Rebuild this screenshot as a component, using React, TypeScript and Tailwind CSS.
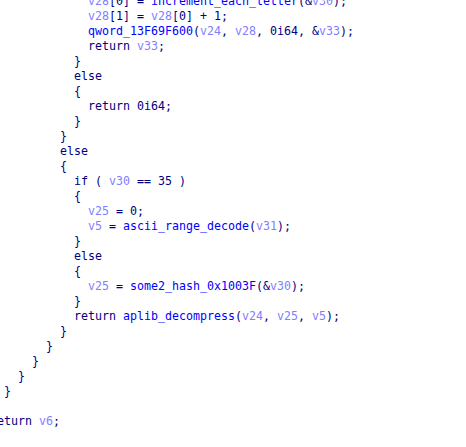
const lines: [number, string][] = [
    [14, "v28[0] = increment_each_letter(&v30);"],
    [14, "v28[1] = v28[0] + 1;"],
    [14, "qword_13F69F600(v24, v28, 0i64, &v33);"],
    [14, "return v33;"],
    [12, "}"],
    [12, "else"],
    [12, "{"],
    [14, "return 0i64;"],
    [12, "}"],
    [10, "}"],
    [10, "else"],
    [10, "{"],
    [12, "if ( v30 == 35 )"],
    [12, "{"],
    [14, "v25 = 0;"],
    [14, "v5 = ascii_range_decode(v31);"],
    [12, "}"],
    [12, "else"],
    [12, "{"],
    [14, "v25 = some2_hash_0x1003F(&v30);"],
    [12, "}"],
    [12, "return aplib_decompress(v24, v25, v5);"],
    [10, "}"],
    [8, "}"],
    [6, "}"],
    [4, "}"],
    [2, "}"],
    [0, ""],
    [0, "return v6;"],
]

// split a line into colored pieces, roughly like the IDA pseudocode view
function tokens(text: string) {
    const parts = text.match(/[A-Za-z_][A-Za-z0-9_]*|\d[A-Za-z0-9]*|\s+|./g) ?? []
    return parts.map((p, i) => {
        let cls = "text-[#000080]"
        if (/^v\d+$/.test(p)) cls = "text-[#8080ff]"
        else if (/^[A-Za-z_]/.test(p) && parts[i + 1] === "(") cls = "text-[#0000ff]"
        return <span key={i} className={cls}>{p}</span>
    })
}

export default function App() {
    return (
        <div className="w-[466px] h-[447px] overflow-hidden bg-white">
            <div className="ml-[-10px] mt-[-6px] font-['DejaVu_Sans_Mono',monospace] text-[11.63px] leading-[15px] whitespace-pre">
                {lines.map(([indent, text], i) => (
                    <div key={i} className="h-[15px]">
                        {" ".repeat(indent)}
                        {tokens(text)}
                    </div>
                ))}
            </div>
        </div>
    )
}
